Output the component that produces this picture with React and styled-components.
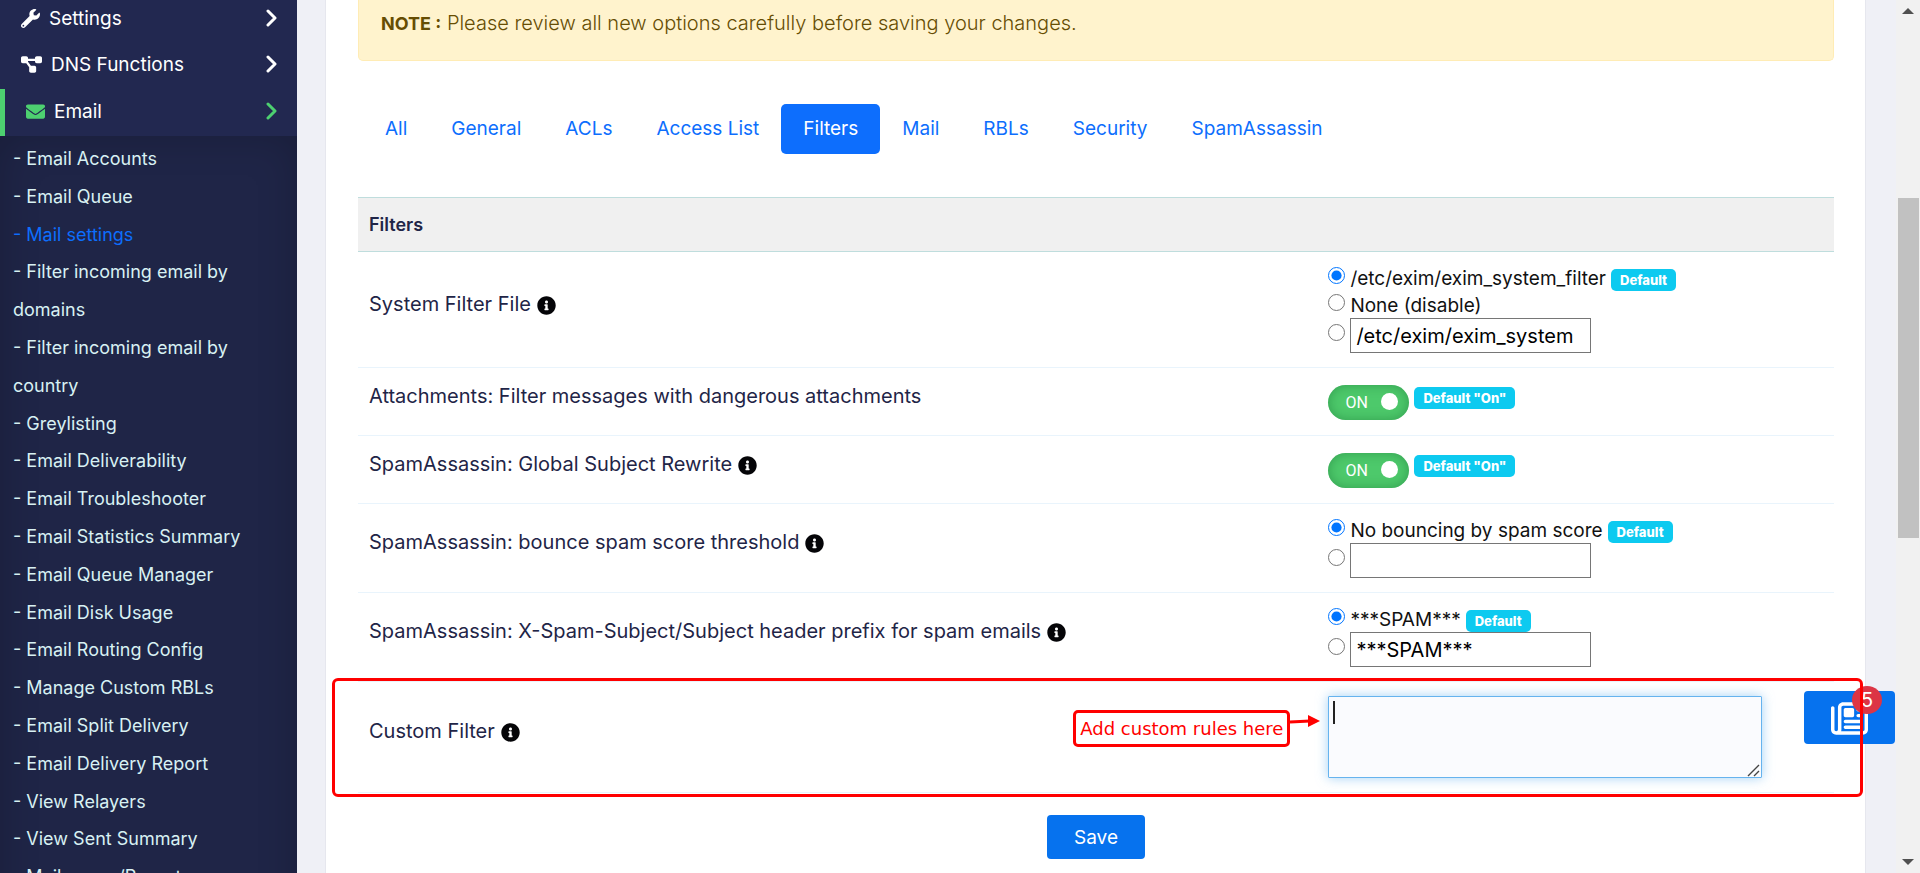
import React from 'react';
import styled, { createGlobalStyle, css } from 'styled-components';
import { FaWrench, FaEnvelope, FaInfoCircle } from 'react-icons/fa';
import { FaDiagramProject, FaRegNewspaper } from 'react-icons/fa6';

const submenu = [
  'Email Accounts',
  'Email Queue',
  'Mail settings',
  'Filter incoming email by domains',
  'Filter incoming email by country',
  'Greylisting',
  'Email Deliverability',
  'Email Troubleshooter',
  'Email Statistics Summary',
  'Email Queue Manager',
  'Email Disk Usage',
  'Email Routing Config',
  'Manage Custom RBLs',
  'Email Split Delivery',
  'Email Delivery Report',
  'View Relayers',
  'View Sent Summary',
  'Mail usage/Reports',
];

const tabs = [
  'All',
  'General',
  'ACLs',
  'Access List',
  'Filters',
  'Mail',
  'RBLs',
  'Security',
  'SpamAssassin',
];

const Chevron = () => (
  <svg width="12" height="18" viewBox="0 0 12 18" aria-hidden="true">
    <path
      d="M2 2l7 7-7 7"
      fill="none"
      stroke="currentColor"
      strokeWidth="3"
      strokeLinecap="round"
      strokeLinejoin="round"
    />
  </svg>
);

const MenuItem = ({ icon, active, children }) => (
  <MenuLink href="#" $active={active}>
    {icon}
    <span>{children}</span>
    <Chevron />
  </MenuLink>
);

const Setting = ({ label, info, htmlFor, children }) => (
  <tr>
    <LabelCell scope="row">
      <label htmlFor={htmlFor}>{label}</label>
      {info && <FaInfoCircle />}
    </LabelCell>
    <ValueCell>{children}</ValueCell>
  </tr>
);

const RadioOption = ({ name, label, badge, checked }) => (
  <OptionRow>
    <label>
      <Radio type="radio" name={name} defaultChecked={checked} />
      {label}
    </label>
    {badge && <Badge>Default</Badge>}
  </OptionRow>
);

const CustomOption = ({ name, id, value }) => (
  <OptionRow $tall>
    <Radio type="radio" name={name} aria-label="Custom value" />
    <TextInput id={id} type="text" defaultValue={value} aria-label="Custom value" />
  </OptionRow>
);

const Toggle = ({ id }) => (
  <ToggleRow>
    <Switch>
      <input id={id} type="checkbox" role="switch" defaultChecked />
      ON
      <i />
    </Switch>
    <Badge>Default "On"</Badge>
  </ToggleRow>
);

const App = () => {
  return (
    <Page>
      <GlobalStyle />
      <Sidebar>
        <MenuItem icon={<FaWrench size={19} />}>Settings</MenuItem>
        <MenuItem icon={<FaDiagramProject size={21} />}>DNS Functions</MenuItem>
        <MenuItem icon={<FaEnvelope size={19} />} active>
          Email
        </MenuItem>
        <Submenu>
          {submenu.map((item) => (
            <li key={item}>
              <SubLink href="#" $active={item === 'Mail settings'}>
                {`- ${item}`}
              </SubLink>
            </li>
          ))}
        </Submenu>
      </Sidebar>

      <Main>
        <Card>
          <Alert>
            <strong>NOTE :</strong> Please review all new options carefully before
            saving your changes.
          </Alert>

          <Tabs>
            {tabs.map((tab) => (
              <Tab key={tab} href="#" $active={tab === 'Filters'}>
                {tab}
              </Tab>
            ))}
          </Tabs>

          <Table>
            <colgroup>
              <LabelColumn />
              <col />
            </colgroup>
            <thead>
              <tr>
                <th colSpan="2">Filters</th>
              </tr>
            </thead>
            <tbody>
              <Setting label="System Filter File" info htmlFor="filter-file">
                <RadioOption
                  name="file"
                  label="/etc/exim/exim_system_filter"
                  badge
                  checked
                />
                <RadioOption name="file" label="None (disable)" />
                <CustomOption
                  name="file"
                  id="filter-file"
                  value="/etc/exim/exim_system"
                />
              </Setting>
              <Setting
                label="Attachments: Filter messages with dangerous attachments"
                htmlFor="attachments"
              >
                <Toggle id="attachments" />
              </Setting>
              <Setting
                label="SpamAssassin: Global Subject Rewrite"
                info
                htmlFor="rewrite"
              >
                <Toggle id="rewrite" />
              </Setting>
              <Setting
                label="SpamAssassin: bounce spam score threshold"
                info
                htmlFor="threshold"
              >
                <RadioOption
                  name="bounce"
                  label="No bouncing by spam score"
                  badge
                  checked
                />
                <CustomOption name="bounce" id="threshold" value="" />
              </Setting>
              <Setting
                label="SpamAssassin: X-Spam-Subject/Subject header prefix for spam emails"
                info
                htmlFor="prefix"
              >
                <RadioOption name="prefix" label="***SPAM***" badge checked />
                <CustomOption name="prefix" id="prefix" value="***SPAM***" />
              </Setting>
              <HighlightedRow>
                <LabelCell scope="row">
                  <label htmlFor="custom">Custom Filter</label>
                  <FaInfoCircle />
                  <Frame />
                </LabelCell>
                <ValueCell>
                  <Editor>
                    <TextArea id="custom" />
                    <Caret />
                    <Grip width="13" height="13" viewBox="0 0 13 13">
                      <path d="M1 12L12 1M7 12l5-5" stroke="#444" strokeWidth="1.4" />
                    </Grip>
                    <Callout>
                      <CalloutText>Add custom rules here</CalloutText>
                      <svg width="30" height="14" viewBox="0 0 30 14">
                        <path d="M0 8L20 7" stroke="#f00" strokeWidth="3" />
                        <path d="M18 1l12 6-12 6z" fill="#f00" />
                      </svg>
                    </Callout>
                  </Editor>
                </ValueCell>
              </HighlightedRow>
            </tbody>
          </Table>

          <SaveButton type="button">Save</SaveButton>
        </Card>

        <NewsButton type="button" aria-label="News">
          <FaRegNewspaper size={37} />
          <Count>5</Count>
        </NewsButton>
      </Main>

      <Scrollbar aria-hidden="true">
        <Arrow />
        <Thumb />
        <Arrow $down />
      </Scrollbar>
    </Page>
  );
};

const GlobalStyle = createGlobalStyle`
  * {
    box-sizing: border-box;
  }

  body {
    margin: 0;
    overflow: hidden;
    font-family: Inter, 'Liberation Sans', sans-serif;
    font-size: 18px;
    font-weight: 400;
    color: #212529;
  }

  a {
    text-decoration: none;
  }

  button,
  input,
  textarea {
    font-family: inherit;
  }
`;

const Page = styled.div`
  display: flex;
  height: 100vh;
  overflow: hidden;
  background: #eff0f6;
`;

const Sidebar = styled.nav`
  flex: 0 0 297px;
  display: flex;
  flex-direction: column;
  justify-content: flex-start;
  background: #222850;
  overflow: hidden;

  > :first-child {
    height: 42px;
    padding-bottom: 6px;
  }
`;

const MenuLink = styled.a`
  flex: none;
  display: flex;
  align-items: center;
  gap: 9px;
  height: 47px;
  padding: 0 19px 3px 21px;
  color: #fff;
  font-size: 19px;

  span {
    flex: 1;
  }

  ${(props) =>
    props.$active &&
    css`
      border-left: 5px solid #4dd070;

      svg {
        color: #4dd070;
      }
    `}
`;

const Submenu = styled.ul`
  flex: none;
  margin: 0;
  padding: 4px 14px 40px 13px;
  list-style: none;
  line-height: 2.1;
  background: #1f2547;
  box-shadow: inset 0 0 40px rgba(0, 0, 0, 0.2);
`;

const SubLink = styled.a`
  color: ${(props) => (props.$active ? '#0d6efd' : '#d8f1f3')};
`;

const Main = styled.main`
  position: relative;
  flex: 1;
  min-width: 0;
  padding: 0 30px 0 28px;
`;

const Card = styled.section`
  min-height: 100vh;
  padding: 0 31px 0 32px;
  background: #fff;
  border: 1px solid #e6e7ee;
  border-width: 0 1px;
`;

const Alert = styled.div`
  height: 61px;
  padding: 10px 22px 0;
  font-size: 20px;
  font-weight: 300;
  line-height: 27px;
  color: #664d03;
  background: #fff3cd;
  border: 1px solid #ffecb5;
  border-top: 0;
  border-radius: 0 0 5px 5px;

  strong {
    font-size: 18px;
    font-weight: 700;
  }
`;

const Tabs = styled.nav`
  display: flex;
  padding: 43px 5px;
`;

const Tab = styled.a`
  padding: 11px 22px;
  font-size: 19px;
  line-height: 28px;
  border-radius: 5px;
  color: ${(props) => (props.$active ? '#fff' : '#0d6efd')};
  background: ${(props) => (props.$active ? '#0d6efd' : 'transparent')};
`;

const Table = styled.table`
  width: 100%;
  border-collapse: collapse;
  table-layout: fixed;

  thead th {
    height: 54px;
    padding: 0 11px;
    text-align: left;
    font-size: 18px;
    font-weight: 600;
    color: #1f2547;
    background: #f0f0f0;
    border: 1px solid #bfdddd;
    border-width: 1px 0;
  }

  tbody tr {
    border-bottom: 1px solid #e9f4fc;
  }
`;

const LabelColumn = styled.col`
  width: 65%;
`;

const LabelCell = styled.th`
  padding: 0 11px 12px;
  text-align: left;
  font-size: 20px;
  font-weight: 400;
  color: #1f2547;

  svg {
    margin-left: 6px;
    width: 19px;
    height: 19px;
    vertical-align: -4px;
    color: #050508;
  }
`;

const ValueCell = styled.td`
  padding: 12px 11px;
`;

const OptionRow = styled.div`
  display: flex;
  align-items: flex-start;
  gap: 5px;
  height: ${(props) => (props.$tall ? '37px' : '27px')};
  font-size: 19px;
  line-height: 29px;
  color: #111;

  label {
    display: flex;
    gap: 5px;
  }

  > input[type='radio'] {
    margin-top: 6px;
  }
`;

const Radio = styled.input`
  flex: none;
  width: 17px;
  height: 17px;
  margin: 3px 0 0;
`;

const TextInput = styled.input`
  width: 241px;
  height: 35px;
  padding: 0 5px;
  font-size: 20px;
  color: #000;
  border: 1px solid #767676;
  border-radius: 0;
`;

const Badge = styled.span`
  margin-top: 5px;
  padding: 0 9px;
  font-size: 13px;
  font-weight: 800;
  line-height: 22px;
  color: #fff;
  background: #0dcaf0;
  border-radius: 5px;
`;

const ToggleRow = styled.div`
  display: flex;
  align-items: flex-start;
  gap: 5px;
  height: 43px;
  padding-top: 5px;

  ${Badge} {
    margin-top: 2px;
  }
`;

const Switch = styled.label`
  position: relative;
  display: flex;
  align-items: center;
  justify-content: space-between;
  width: 81px;
  height: 35px;
  padding: 0 11px 0 17px;
  font-family: Roboto, sans-serif;
  font-size: 16px;
  color: #fff;
  background: #4dc96b;
  border-radius: 18px;
  box-shadow: inset 0 0 12px rgba(0, 80, 30, 0.35);

  input {
    position: absolute;
    inset: 0;
    margin: 0;
    opacity: 0;
  }

  i {
    width: 17px;
    height: 17px;
    margin-bottom: 2px;
    background: #fff;
    border-radius: 50%;
  }
`;

const HighlightedRow = styled.tr`
  position: relative;
`;

const Frame = styled.span`
  position: absolute;
  inset: -4px -29px -5px -26px;
  z-index: 2;
  border: 3px solid #f00;
  border-radius: 6px;
  pointer-events: none;
`;

const Editor = styled.div`
  position: relative;
  width: 434px;
  margin: 2px 0;
`;

const TextArea = styled.textarea`
  display: block;
  width: 100%;
  height: 82px;
  padding: 4px 6px;
  font-size: 18px;
  background: #fafbfe;
  border: 1px solid #66b3ee;
  border-radius: 1px;
  box-shadow: 0 0 12px rgba(102, 179, 238, 0.6);
  outline: none;
  resize: none;
`;

const Caret = styled.span`
  position: absolute;
  top: 5px;
  left: 5px;
  width: 2px;
  height: 23px;
  background: #222;
`;

const Grip = styled.svg`
  position: absolute;
  right: 2px;
  bottom: 1px;
`;

const Callout = styled.div`
  position: absolute;
  top: 14px;
  right: 100%;
  display: flex;
  align-items: flex-start;
  margin-right: 8px;

  svg {
    flex: none;
    margin-top: 4px;
  }
`;

const CalloutText = styled.span`
  padding: 0 4px;
  font-family: 'DejaVu Sans', sans-serif;
  font-size: 18px;
  line-height: 31px;
  white-space: nowrap;
  color: #f00;
  background: #fff;
  border: 3px solid #f00;
  border-radius: 5px;
`;

const SaveButton = styled.button`
  display: block;
  width: 98px;
  height: 44px;
  margin: 22px auto 0;
  font-size: 19px;
  color: #fff;
  background: #0672ee;
  border: 0;
  border-radius: 4px;
`;

const NewsButton = styled.button`
  position: absolute;
  right: 1px;
  bottom: 129px;
  width: 91px;
  height: 53px;
  padding: 0;
  color: #fff;
  background: #0672ee;
  border: 0;
  border-radius: 4px;

  svg {
    display: block;
    margin: 2px auto 0;
  }
`;

const Count = styled.span`
  position: absolute;
  top: -5px;
  right: 13px;
  width: 30px;
  height: 28px;
  font-size: 20px;
  line-height: 28px;
  text-align: center;
  background: #dc3545;
  border-radius: 50%;
`;

const Scrollbar = styled.div`
  flex: 0 0 24px;
  display: grid;
  grid-template-rows: 22px 1fr 22px;
  justify-items: center;
  background: #f1f1f1;
`;

const Arrow = styled.span`
  align-self: center;
  border: 6px solid transparent;
  ${(props) =>
    props.$down
      ? css`
          border-top-color: #505050;
          border-bottom: 0;
        `
      : css`
          border-bottom-color: #505050;
          border-top: 0;
        `}
`;

const Thumb = styled.span`
  width: 21px;
  height: 41%;
  margin-top: 176px;
  background: #c1c1c1;
`;

export default App;
